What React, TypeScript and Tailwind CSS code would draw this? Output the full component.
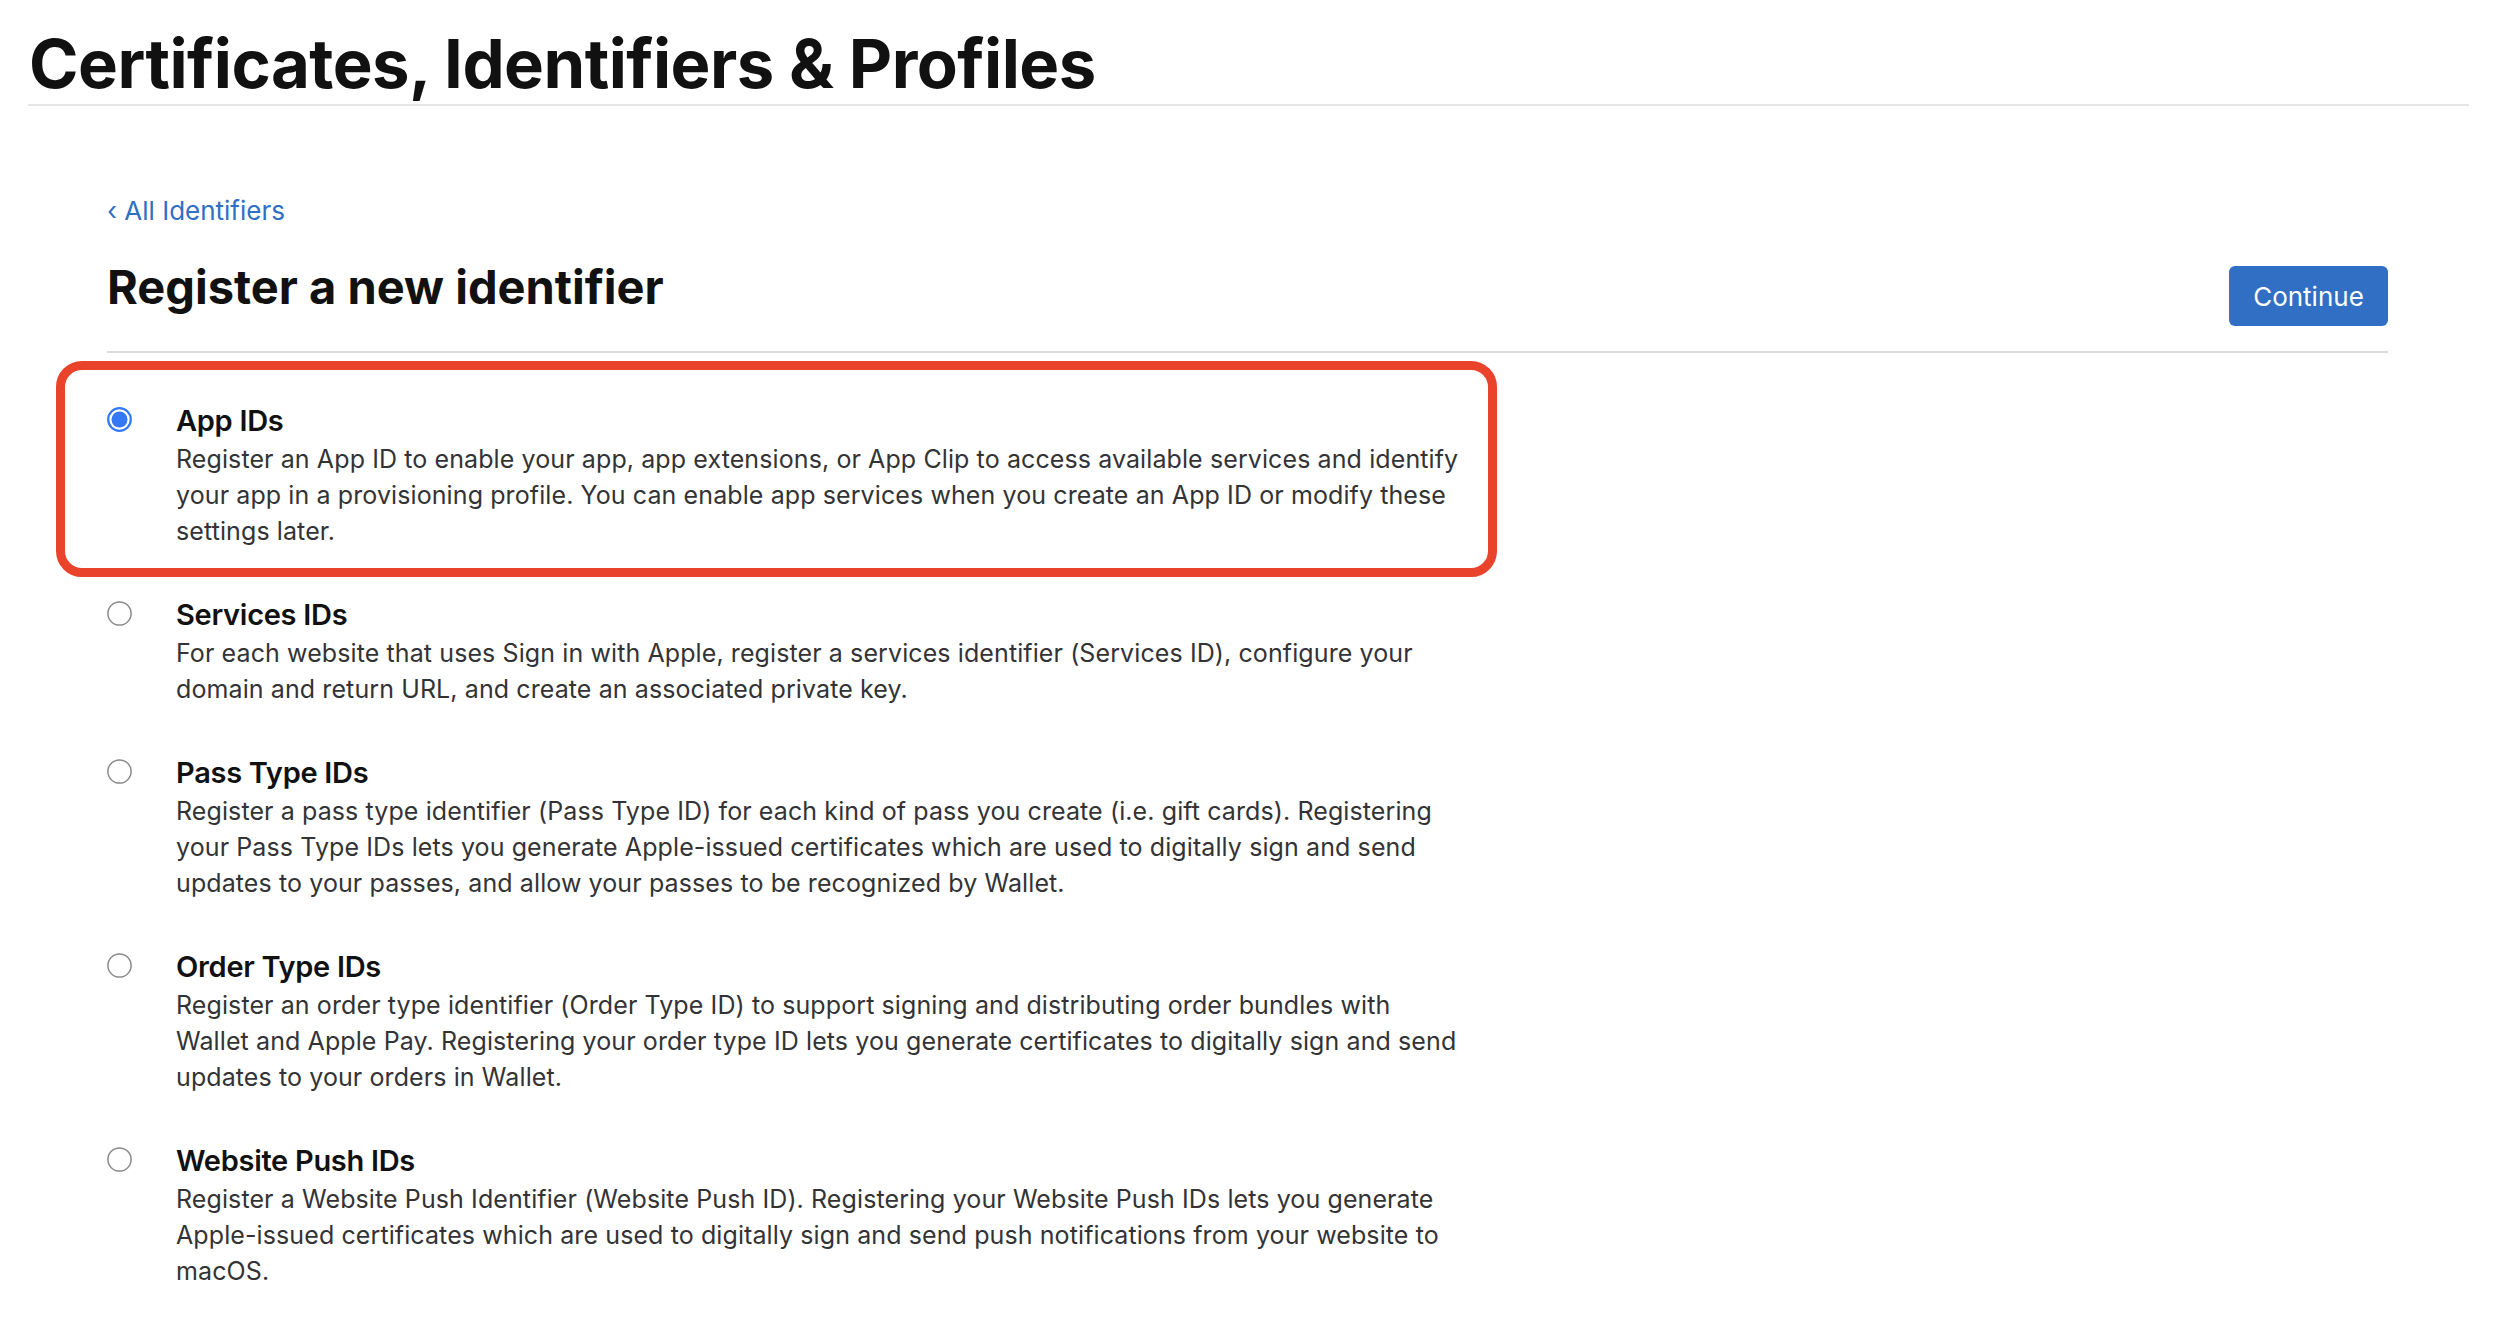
import React from 'react';

type IdentifierType = {
  id: string;
  title: string;
  lines: string[];
};

const identifierTypes: IdentifierType[] = [
  {
    id: 'app',
    title: 'App IDs',
    lines: [
      'Register an App ID to enable your app, app extensions, or App Clip to access available services and identify',
      'your app in a provisioning profile. You can enable app services when you create an App ID or modify these',
      'settings later.',
    ],
  },
  {
    id: 'services',
    title: 'Services IDs',
    lines: [
      'For each website that uses Sign in with Apple, register a services identifier (Services ID), configure your',
      'domain and return URL, and create an associated private key.',
    ],
  },
  {
    id: 'pass',
    title: 'Pass Type IDs',
    lines: [
      'Register a pass type identifier (Pass Type ID) for each kind of pass you create (i.e. gift cards). Registering',
      'your Pass Type IDs lets you generate Apple-issued certificates which are used to digitally sign and send',
      'updates to your passes, and allow your passes to be recognized by Wallet.',
    ],
  },
  {
    id: 'order',
    title: 'Order Type IDs',
    lines: [
      'Register an order type identifier (Order Type ID) to support signing and distributing order bundles with',
      'Wallet and Apple Pay. Registering your order type ID lets you generate certificates to digitally sign and send',
      'updates to your orders in Wallet.',
    ],
  },
  {
    id: 'push',
    title: 'Website Push IDs',
    lines: [
      'Register a Website Push Identifier (Website Push ID). Registering your Website Push IDs lets you generate',
      'Apple-issued certificates which are used to digitally sign and send push notifications from your website to',
      'macOS.',
    ],
  },
];

const Radio: React.FC<{ checked: boolean }> = ({ checked }) => (
  <svg width="25" height="25" viewBox="0 0 25 25" className="shrink-0 mt-[6px]">
    {checked ? (
      <>
        <circle cx="12.5" cy="12.5" r="11.3" fill="white" stroke="#3478f6" strokeWidth="2.2" />
        <circle cx="12.5" cy="12.5" r="8" fill="#3478f6" />
      </>
    ) : (
      <circle cx="12.5" cy="12.5" r="11.6" fill="white" stroke="#8a8a8d" strokeWidth="1.5" />
    )}
  </svg>
);

const App: React.FC = () => {
  return (
    <div className="min-h-screen bg-white text-[#1d1d1f]" style={{ fontFamily: 'Inter, "Noto Sans", sans-serif' }}>
      <header className="ml-[28px] mr-[43px] pt-[27px] pb-[3px] border-b-2 border-[#e5e5e5]">
        <h1 className="pl-[1px] text-[67px] leading-[74px] font-bold tracking-[-0.008em] text-[#111111]">
          Certificates, Identifiers &amp; Profiles
        </h1>
      </header>

      <main className="pl-[107px] pr-[124px]">
        <a href="#" className="block mt-[90px] text-[26px] leading-[30px] text-[#2f6fc4]">
          ‹ All Identifiers
        </a>

        <div className="mt-[33px] flex justify-between items-start pb-[25px] border-b-2 border-[#dcdcdc]">
          <h2 className="text-[47px] leading-[56px] font-bold text-[#111111]">
            Register a new identifier
          </h2>
          <button className="mt-[7px] h-[60px] w-[159px] rounded-md bg-[#306fc4] text-white text-[26px] flex items-center justify-center">
            Continue
          </button>
        </div>

        <div className="mt-[48px] flex flex-col gap-[46px]">
          {identifierTypes.map((item, i) => (
            <div key={item.id} className="relative flex items-start gap-[44px]">
              {i === 0 && (
                <div className="absolute left-[-51px] top-[-40px] w-[1441px] h-[216px] rounded-[26px] border-[9px] border-[#e9432b] pointer-events-none" />
              )}
              <Radio checked={i === 0} />
              <div>
                <div className="text-[29px] leading-[40px] font-semibold tracking-[-0.01em] text-[#111111]">
                  {item.title}
                </div>
                <div className="text-[25px] leading-[36px] text-[#333336] tracking-[0.004em]">
                  {item.lines.map((line) => (
                    <span key={line} className="block whitespace-nowrap">
                      {line}
                    </span>
                  ))}
                </div>
              </div>
            </div>
          ))}
        </div>
      </main>
    </div>
  );
};

export default App;
